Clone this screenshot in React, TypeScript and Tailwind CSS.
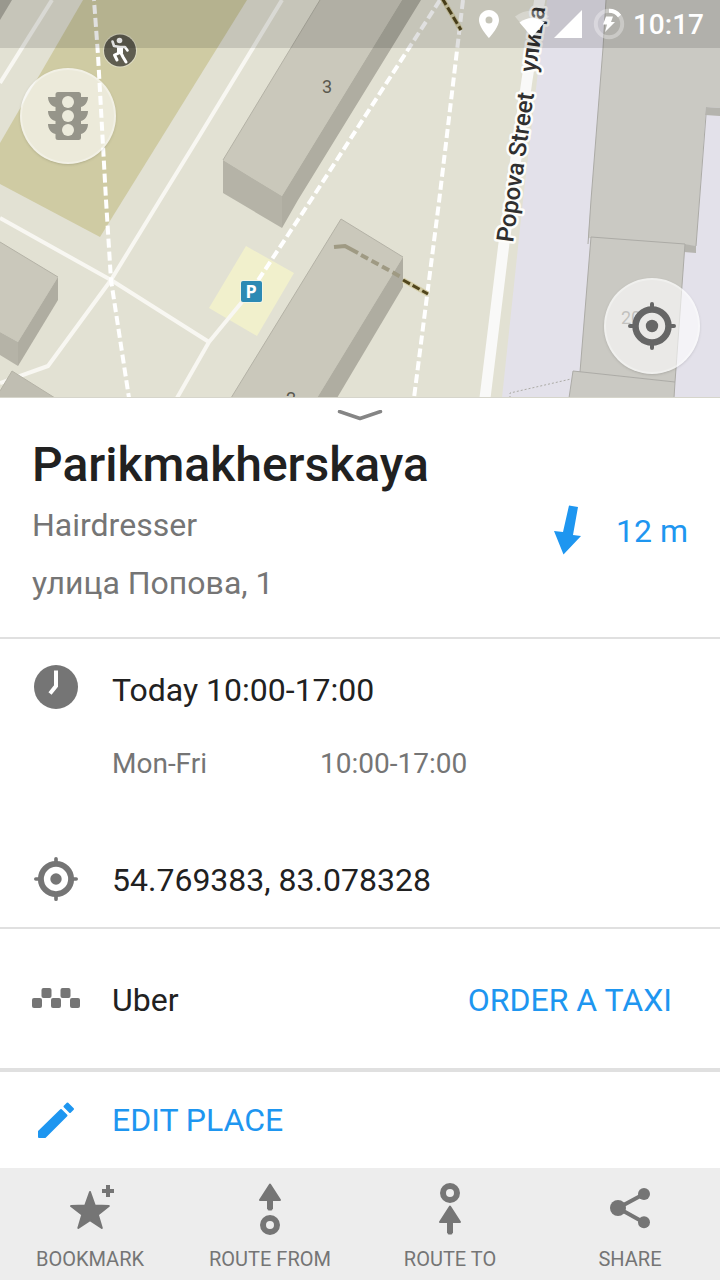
import React from "react";

function MapCanvas() {
  return (
    <svg
      className="block h-full w-full"
      viewBox="0 0 720 398"
      preserveAspectRatio="xMidYMin slice"
      role="img"
      aria-label="Map of Popova Street"
    >
      <rect width="720" height="398" fill="#e2e1d3" />
      <polygon points="83,0 247,0 100,237 0,184 0,143" fill="#cfcba3" />
      <polygon points="0,0 12,0 0,20" fill="#afada2" />
      <polygon points="246,246 294,273 257,336 209,308" fill="#f1f0cc" />
      <polygon points="547,0 537,80 523,200 502,398 720,398 720,0" fill="#e3e1ea" />

      <g fill="none" stroke="#f8f7f2" strokeWidth="4" strokeLinejoin="round">
        <polyline points="52,0 0,83" />
        <polyline points="282,0 200,135 160,200 111,280 48,366 0,383" />
        <polyline points="0,218 111,280 209,342" />
        <polyline points="177,398 209,342 251,291" />
      </g>
      <g fill="none" stroke="#ffffff" strokeWidth="4" strokeDasharray="9 4">
        <polyline points="94,0 98,55 106,200 111,280 129,398" strokeDashoffset="8" />
        <polyline points="440,0 311,200 251,291" />
        <polyline points="463,0 439,202 414,398" />
      </g>
      <polyline points="540,-2 527,80 504,243 485,398" fill="none" stroke="#f9f9f8" strokeWidth="11" />

      <polyline points="442,-2 461,30" fill="none" stroke="#d3cca5" strokeWidth="5" />
      <polyline points="442,-2 461,30" fill="none" stroke="#51461d" strokeWidth="3" strokeDasharray="8 3" />

      <polygon points="320,0 402,0 282,196 223,160" fill="#cac8bb" />
      <polygon points="402,0 421,0 298,200 282,228 282,196" fill="#afada1" />
      <polygon points="223,160 282,196 282,228 223,193" fill="#b5b3a7" />
      <polyline points="320,0 223,160" fill="none" stroke="#b4b2a6" strokeWidth="1" />

      <polygon points="0,242 58,277 18,342 0,332" fill="#cac8bb" />
      <polygon points="58,277 58,300 18,366 18,342" fill="#afada1" />
      <polygon points="0,332 18,342 18,366 0,355" fill="#b5b3a7" />
      <polyline points="0,242 58,277" fill="none" stroke="#b4b2a6" strokeWidth="1" />
      <polygon points="12,371 55,398 0,398 0,391" fill="#c0beb2" />
      <polyline points="0,391 12,371 55,398" fill="none" stroke="#b4b2a6" strokeWidth="1" />

      <polygon points="341,219 403,257 317,398 231,398" fill="#cac8bb" />
      <polygon points="403,257 403,287 337,398 317,398" fill="#afada1" />
      <polyline points="231,398 341,219 403,257" fill="none" stroke="#b4b2a6" strokeWidth="1" />
      <polyline points="334,247 345,246 358,253" fill="none" stroke="#9f9a83" strokeWidth="4" />
      <line x1="361" y1="255" x2="403" y2="278" stroke="#9f9a83" strokeWidth="4" strokeDasharray="8 4" />
      <line x1="403" y1="280" x2="428" y2="294" stroke="#d3cca5" strokeWidth="5" />
      <line x1="403" y1="280" x2="428" y2="294" stroke="#51461d" strokeWidth="3" strokeDasharray="8 3" />

      <polygon points="606,0 720,0 720,108 706,107 696,246 588,238 603,48" fill="#cac9c3" />
      <polygon points="706,107 720,108 720,116 705,115" fill="#b5b4ae" />
      <polygon points="684,244 696,246 696,253 684,252" fill="#b5b4ae" />
      <polygon points="591,237 685,244 675,382 580,372" fill="#cac9c3" />
      <polygon points="573,371 675,382 674,398 569,398" fill="#cac9c3" />
      <g fill="none" stroke="#acaba6" strokeWidth="1">
        <polyline points="606,0 603,48 591,200 588,244" />
        <polyline points="706,115 696,246" />
        <polyline points="580,372 591,237 685,244 675,382 674,398" />
        <polyline points="569,398 573,371 675,382" />
        <polyline points="510,398 510,393 571,379" strokeDasharray="2 2" />
      </g>

      <rect x="240" y="280" width="23" height="23" rx="3" fill="#f3f5e4" />
      <rect x="241" y="281" width="21" height="21" rx="2" fill="#2c8ab4" />
      <g fontFamily="Roboto, sans-serif">
        <text x="251" y="298" textAnchor="middle" fontFamily="Noto Sans, sans-serif" fontSize="18" fontWeight="700" fill="#fff">P</text>
        <text x="327" y="93" textAnchor="middle" fontSize="18" fill="#5a594f">3</text>
        <text x="291" y="405" textAnchor="middle" fontSize="18" fill="#5a594f">2</text>
        <text x="631" y="324" textAnchor="middle" fontSize="18" fill="#66655e">20</text>
        <g
          fontSize="24"
          fontWeight="500"
          fill="#303030"
          stroke="#fdfdfa"
          strokeWidth="5"
          strokeLinejoin="round"
          paintOrder="stroke"
        >
          <text transform="translate(513 243) rotate(-82)">Popova Street</text>
          <text transform="translate(536 73) rotate(-82)">улица</text>
        </g>
      </g>

      <circle cx="120" cy="50.500" r="17" fill="#dedcc4" />
      <circle cx="120" cy="50.500" r="16" fill="#5f5d50" />
      <g fill="none" stroke="#fff" strokeLinecap="round" strokeLinejoin="round">
        <circle cx="119.500" cy="40.500" r="2.800" fill="#fff" stroke="none" />
        <path d="M120 46v7" strokeWidth="6" strokeLinecap="butt" />
        <path d="M112.500 41.500l1.500 4.500 6 1 5 0 2.500 3.500" strokeWidth="2.600" />
        <path d="M119 53l-4.500 2 2.500 5M121 53l2 4 3 5" strokeWidth="3" />
      </g>
    </svg>
  );
}

function TargetIcon() {
  return (
    <svg className="size-full" viewBox="0 0 48 48" aria-hidden="true" fill="none" stroke="currentColor">
      <circle cx="24" cy="24" r="16.500" strokeWidth="6.500" />
      <circle cx="24" cy="24" r="6.200" fill="currentColor" stroke="none" />
      <path d="M24 2v5M24 41v5M2 24h5M41 24h5" strokeWidth="4" strokeLinecap="round" />
    </svg>
  );
}

function TrafficIcon() {
  return (
    <svg className="size-12" viewBox="0 0 48 48" aria-hidden="true">
      <path
        fill="#96958a"
        d="M14 0h20.500a2.500 2.500 0 0 1 2.500 2.500V5h7c0 5-3 9-7 10v4h7c0 5-3 9-7 10v3h7c0 5-3 9-7 10v3.500a2.500 2.500 0 0 1-2.500 2.500H14a2.500 2.500 0 0 1-2.500-2.500V42C7 41 4 37 4 32h7.500v-3C7 28 4 24 4 19h7.500v-4C7 14 4 10 4 5h7.500V2.500A2.500 2.500 0 0 1 14 0z"
      />
      <g fill="#ecebdc">
        <circle cx="24" cy="10" r="6" />
        <circle cx="24" cy="24" r="6" />
        <circle cx="24" cy="38" r="6" />
      </g>
    </svg>
  );
}

function StatusBar() {
  return (
    <div className="absolute inset-x-0 top-0 flex h-12 items-center justify-end bg-black/12 pr-4 text-white">
      <svg className="mr-[15px] h-7 w-5" viewBox="0 0 20 28" fill="currentColor" aria-hidden="true">
        <path fillRule="evenodd" d="M10 0C4.500 0 0 4.400 0 10c0 7.500 10 18 10 18s10-10.500 10-18c0-5.600-4.500-10-10-10zm0 6.500a3.500 3.500 0 1 1 0 7 3.500 3.500 0 0 1 0-7z" />
      </svg>
      <svg className="mr-1 h-7 w-9" viewBox="0 0 36 28" fill="currentColor" aria-hidden="true">
        <path fillOpacity=".3" d="M1 6.500c10-8 24-8 34 0L18 27z" />
        <path d="M5.500 12.500c8-6 17-6 25 0L18 27z" />
      </svg>
      <svg className="mr-[11px] size-7" viewBox="0 0 28 28" fill="currentColor" aria-hidden="true">
        <path d="M28 0v28H0z" />
      </svg>
      <svg className="mr-2 size-8" viewBox="0 0 32 32" fill="none" aria-hidden="true">
        <circle cx="16" cy="16" r="13.200" stroke="#fff" strokeOpacity=".32" strokeWidth="4" />
        <path d="M16 2.800A13.200 13.200 0 0 1 26.500 8" stroke="#fff" strokeWidth="4" />
        <path d="M13 8.500h7l-2 5.500h4L12 24l2-7.500h-4z" fill="#fff" />
      </svg>
      <time className="pt-0.5 text-[28px] font-medium leading-9">10:17</time>
    </div>
  );
}

function BookmarkIcon() {
  return (
    <svg className="size-14" viewBox="0 0 56 56" fill="currentColor" stroke="currentColor" strokeLinejoin="round" aria-hidden="true">
      <path strokeWidth="2" d="M28 12l4.800 13.500 14 .5-11 8.600 4 13.400L28 40.200 16.300 48l4-13.400L9 26l14.200-.5z" />
      <path d="M46 5v12M40 11h12" strokeWidth="4" />
    </svg>
  );
}

function RouteFromIcon() {
  return (
    <svg className="size-14" viewBox="0 0 56 56" fill="currentColor" stroke="currentColor" strokeLinejoin="round" aria-hidden="true">
      <path strokeWidth="2" d="M28 4.500L38 20H18z" />
      <path d="M28 20v9" strokeWidth="6" strokeLinecap="butt" />
      <path d="M27 29h2" strokeWidth="3" strokeLinecap="round" />
      <circle cx="28" cy="45" r="7" fill="none" strokeWidth="6" />
    </svg>
  );
}

function RouteToIcon() {
  return (
    <svg className="size-14" viewBox="0 0 56 56" fill="currentColor" stroke="currentColor" strokeLinejoin="round" aria-hidden="true">
      <circle cx="28" cy="13" r="7" fill="none" strokeWidth="6" />
      <path strokeWidth="2" d="M28 26.500L38 42H18z" />
      <path d="M28 42v11" strokeWidth="6" />
      <path d="M27 53h2" strokeWidth="3" strokeLinecap="round" />
    </svg>
  );
}

function ShareIcon() {
  return (
    <svg className="size-14" viewBox="0 0 56 56" fill="currentColor" stroke="none" aria-hidden="true">
      <path d="M42 14L16 28l26 14.500" fill="none" stroke="currentColor" strokeWidth="4" />
      <circle cx="16" cy="28" r="8" />
      <circle cx="42" cy="14" r="6" />
      <circle cx="42" cy="42.300" r="6" />
    </svg>
  );
}

const actions = [
  { label: "BOOKMARK", Icon: BookmarkIcon },
  { label: "ROUTE FROM", Icon: RouteFromIcon },
  { label: "ROUTE TO", Icon: RouteToIcon },
  { label: "SHARE", Icon: ShareIcon },
];

export default function App() {
  return (
    <div className="flex min-h-screen flex-col bg-white font-['Roboto',sans-serif] text-[32px] leading-10 text-[#212121]">
      <section className="relative h-[398px] overflow-hidden border-b border-[#d6d5cb]">
        <MapCanvas />
        <StatusBar />
        <button
          aria-label="Traffic"
          className="absolute left-5 top-[68px] flex size-24 items-center justify-center rounded-full border-2 border-white/30 bg-white/60 shadow-sm"
        >
          <TrafficIcon />
        </button>
        <button
          aria-label="My location"
          className="absolute right-5 top-[278px] flex size-24 items-center justify-center rounded-full border-2 border-white/30 bg-white/60 text-[#666666] shadow-sm"
        >
          <span className="size-12">
            <TargetIcon />
          </span>
        </button>
      </section>

      <main className="flex-1">
        <header className="border-b-2 border-[#e0e0e0] pb-[34px]">
          <button aria-label="Collapse" className="flex h-[39px] w-full justify-center pt-3">
            <svg className="h-3 w-12" viewBox="0 0 48 12" fill="none" aria-hidden="true">
              <path d="M3.500 1.500L24 8.500l20.500-7" stroke="#858585" strokeWidth="3.500" strokeLinejoin="round" strokeLinecap="round" />
            </svg>
          </button>
          <div className="px-8">
            <h1 className="text-5xl font-medium leading-14">Parikmakherskaya</h1>
            <div className="flex items-start justify-between pt-3 text-[#757575]">
              <div className="flex flex-col gap-[18px]">
                <p>Hairdresser</p>
                <p>улица Попова, 1</p>
              </div>
              <div className="flex items-center gap-8 text-[#1e96f0]">
                <svg className="h-13 w-9" viewBox="0 0 36 52" fill="currentColor" aria-hidden="true">
                  <path d="M21 0.500l9 1.500-5 28 8 1-17.500 18.500L6 26l9 1z" />
                </svg>
                <span>12 m</span>
              </div>
            </div>
          </div>
        </header>

        <section className="border-b-2 border-[#e0e0e0] px-8 pb-[22px] pt-6">
          <div className="flex items-start gap-8">
            <svg className="size-12" viewBox="0 0 48 48" aria-hidden="true">
              <circle cx="24" cy="24" r="22" fill="#757575" />
              <path d="M24 7.500V23l-6 7.500" fill="none" stroke="#fff" strokeWidth="4" />
            </svg>
            <p className="leading-[54px]">Today 10:00-17:00</p>
          </div>
          <table className="ml-20 mt-[29px] text-left text-[28px] leading-9 text-[#757575]">
            <tbody>
              <tr>
                <th scope="row" className="w-52 p-0 font-normal">Mon-Fri</th>
                <td className="p-0">10:00-17:00</td>
              </tr>
            </tbody>
          </table>
          <div className="mt-[73px] flex items-start gap-8">
            <span className="size-12 p-0.5 text-[#757575]">
              <TargetIcon />
            </span>
            <p className="leading-[50px]">54.769383, 83.078328</p>
          </div>
        </section>

        <section className="flex h-[143px] items-center gap-8 border-b-4 border-[#e0e0e0] pl-8 pr-12 pt-0.5">
          <svg className="size-12" viewBox="0 0 48 48" fill="#757575" aria-hidden="true">
            <rect x="0" y="22" width="10" height="10" rx="2" />
            <rect x="9.500" y="12" width="10" height="10" rx="2" />
            <rect x="19" y="22" width="10" height="10" rx="2" />
            <rect x="28.500" y="12" width="10" height="10" rx="2" />
            <rect x="38" y="22" width="10" height="10" rx="2" />
          </svg>
          <span>Uber</span>
          <button className="ml-auto text-[#1e96f0]">ORDER A TAXI</button>
        </section>

        <button className="flex h-24 w-full items-center gap-8 px-8 text-[#1e96f0]">
          <svg className="size-12" viewBox="0 0 48 48" fill="currentColor" stroke="currentColor" strokeLinejoin="round" aria-hidden="true">
            <path strokeWidth="2" d="M7 35.500L29 14l5.500 5.500L13 41H7z" />
            <path strokeWidth="2" d="M32.500 10.500L35.500 7.500l5.500 5.500-3 3z" />
          </svg>
          <span>EDIT PLACE</span>
        </button>
      </main>

      <nav className="grid h-28 grid-cols-4 bg-[#ededed] text-xl leading-6 text-[#757575]">
        {actions.map(({ label, Icon }) => (
          <button key={label} className="flex flex-col items-center gap-[11px] pt-3">
            <Icon />
            <span>{label}</span>
          </button>
        ))}
      </nav>
    </div>
  );
}
